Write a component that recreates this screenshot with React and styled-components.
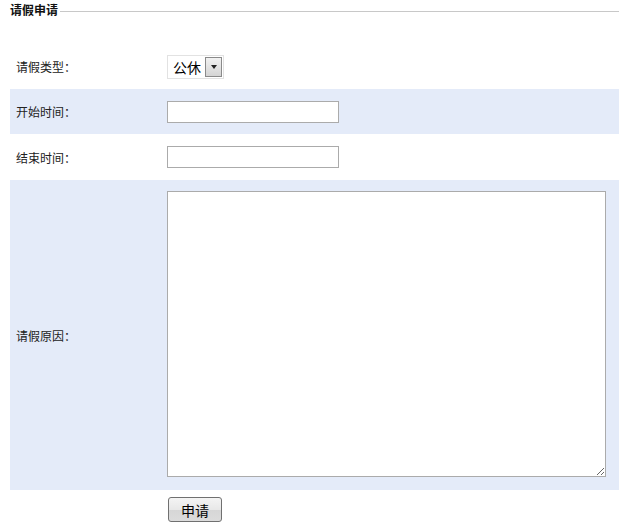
import React from 'react'
import styled, { createGlobalStyle } from 'styled-components'

const Global = createGlobalStyle`
  body {
    margin: 0;
    background: #fff;
    font-family: "Liberation Sans", "Noto Sans CJK SC", sans-serif;
    font-size: 12px;
    color: #222;
  }
`

const Fieldset = styled.fieldset`
  margin: 4px 0 0 0;
  padding: 0 0 0 10px;
  border: 0;
  border-top: 1px solid #c8c8c8;
  min-width: 0;
`

const Legend = styled.legend`
  padding: 0;
  margin-left: -10px;
  padding-left: 10px;
  padding-right: 2px;
  font-weight: bold;
  font-size: 12px;
  line-height: 14px;
  color: #111;
`

const Table = styled.div`
  margin-top: 26px;
  display: flex;
  flex-direction: column;
`

const Row = styled.div`
  display: flex;
  align-items: center;
  height: ${p => p.$h}px;
  background: ${p => (p.$alt ? '#e4ebf9' : '#fff')};
  box-sizing: border-box;
`

const Label = styled.div`
  width: 157px;
  flex: none;
  box-sizing: border-box;
  padding-left: 6px;
  font-size: 12px;
  color: #222;
`

const Cell = styled.div`
  display: flex;
  align-self: ${p => (p.$top != null ? 'flex-start' : 'center')};
  margin-top: ${p => p.$top || 0}px;
`

const Select = styled.div`
  display: flex;
  align-items: center;
  width: 57px;
  height: 24px;
  box-sizing: border-box;
  border: 1px solid #e2e2e2;
  background: #fff;
`

const SelectText = styled.span`
  flex: 1;
  padding-left: 5px;
  font-size: 14px;
  color: #000;
`

const SelectButton = styled.span`
  width: 17px;
  height: 20px;
  margin-right: 1px;
  box-sizing: border-box;
  border: 1px solid #8a8a8a;
  background: linear-gradient(#f2f2f2, #d4d4d4);
  display: flex;
  align-items: center;
  justify-content: center;
  &::after {
    content: '';
    border-left: 3px solid transparent;
    border-right: 3px solid transparent;
    border-top: 4px solid #222;
  }
`

const Input = styled.input`
  width: 172px;
  height: 22px;
  box-sizing: border-box;
  border: 1px solid #ababab;
  background: #fff;
  margin: 0;
  padding: 0 2px;
  font-size: 12px;
`

const TextArea = styled.textarea`
  width: 439px;
  height: 286px;
  box-sizing: border-box;
  border: 1px solid #ababab;
  background: #fff;
  margin: 0;
  padding: 2px;
  resize: both;
  font-size: 12px;
  font-family: "Liberation Sans", "Noto Sans CJK SC", sans-serif;
`

const Button = styled.button`
  width: 54px;
  height: 25px;
  margin: 0 0 0 1px;
  padding: 0;
  border: 1px solid #707070;
  border-radius: 3px;
  background: linear-gradient(#f4f4f4 0%, #e8e8e8 50%, #d6d6d6 51%, #dcdcdc 100%);
  font-size: 14px;
  font-family: "Liberation Sans", "Noto Sans CJK SC", sans-serif;
  color: #000;
`

export default function App() {
  return (
    <>
      <Global />
      <Fieldset>
        <Legend>请假申请</Legend>
        <Table>
          <Row $h={45}>
            <Label>请假类型：</Label>
            <Cell>
              <Select>
                <SelectText>公休</SelectText>
                <SelectButton />
              </Select>
            </Cell>
          </Row>
          <Row $h={45} $alt>
            <Label>开始时间：</Label>
            <Cell>
              <Input type="text" />
            </Cell>
          </Row>
          <Row $h={46}>
            <Label>结束时间：</Label>
            <Cell>
              <Input type="text" />
            </Cell>
          </Row>
          <Row $h={310} $alt>
            <Label>请假原因：</Label>
            <Cell $top={11}>
              <TextArea />
            </Cell>
          </Row>
          <Row $h={42}>
            <Label />
            <Cell $top={7}>
              <Button>申请</Button>
            </Cell>
          </Row>
        </Table>
      </Fieldset>
    </>
  )
}
